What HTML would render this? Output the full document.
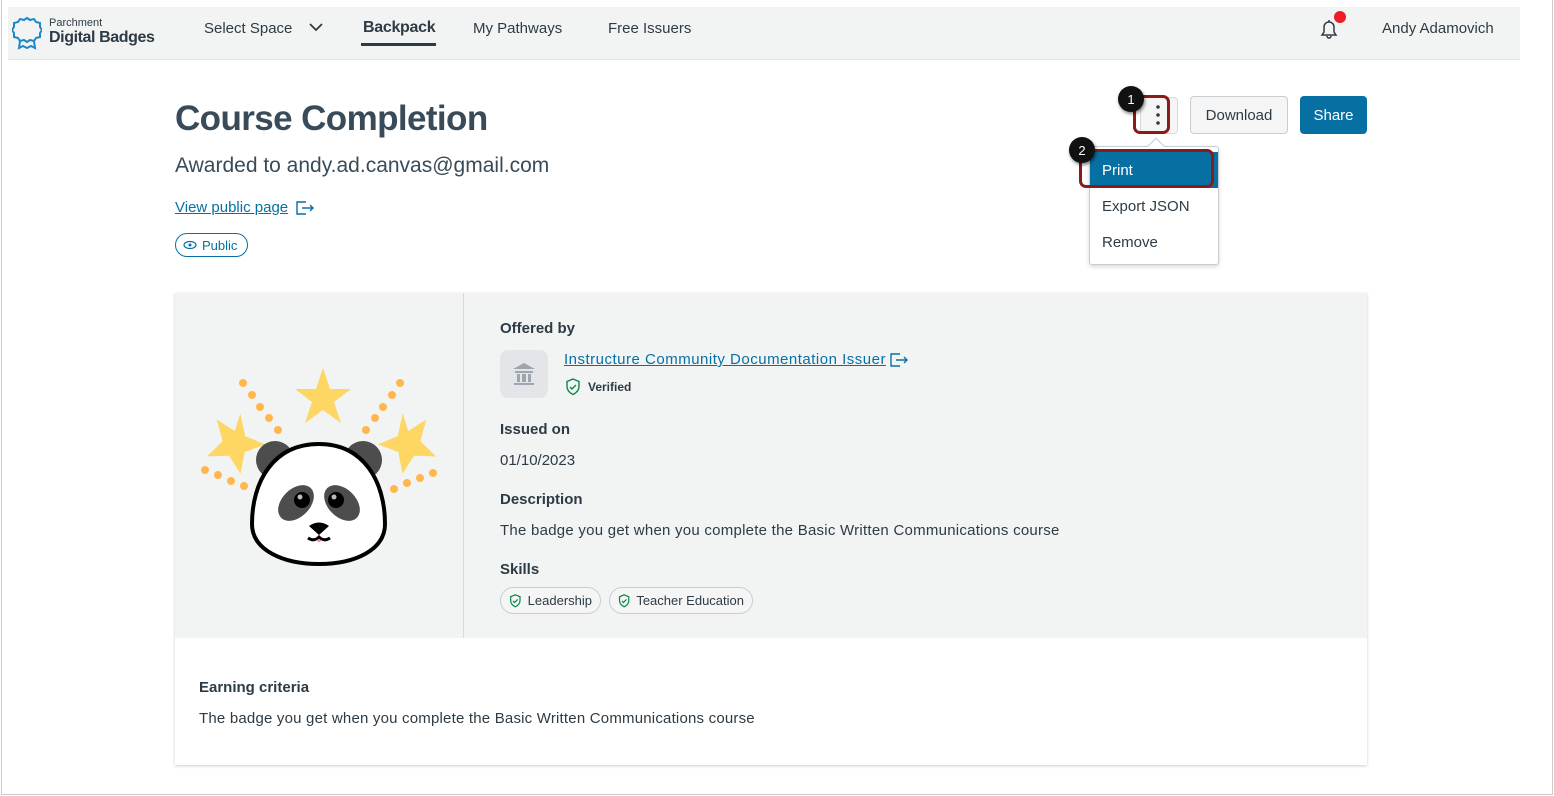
<!DOCTYPE html>
<html><head><meta charset="utf-8"><style>
*{box-sizing:border-box;margin:0;padding:0}
body{width:1554px;height:796px;background:#fff;font-family:"Liberation Sans",sans-serif;color:#2d3b45;position:relative;overflow:hidden}
.frame{position:absolute;left:1px;top:0;width:1552px;height:795px;border-left:1px solid #ccc;border-right:1px solid #ccc;border-bottom:1px solid #ccc}
.hdr{position:absolute;left:8px;top:7px;width:1512px;height:53px;background:#f2f4f4;border-bottom:1px solid #e3e6e8}
.abs{position:absolute;white-space:nowrap}
.nav{font-size:15px;color:#2d3b45}
.a{color:#0770a3;text-decoration:underline}
.btn{position:absolute;border-radius:4px;font-size:15px;display:flex;align-items:center;justify-content:center}
.h{font-size:15px;font-weight:bold;color:#2d3b45}
.t{font-size:15px;color:#2d3b45}
.chip{position:absolute;height:27px;border:1px solid #c7cdd1;border-radius:14px;background:#f5f5f5;font-size:13px;display:flex;align-items:center;padding:0 8px;gap:6px;white-space:nowrap}
.badge{position:absolute;width:26px;height:26px;border-radius:50%;background:#111;color:#fff;font-size:13px;display:flex;align-items:center;justify-content:center;box-shadow:1px 2px 3px rgba(0,0,0,.5)}
</style></head><body>
<div class="frame"></div>
<div class="hdr"></div>
<svg class="abs" style="left:12px;top:16px" width="30" height="34" viewBox="0 0 30 34"><path d="M15 2l3 2 4-1 2 3 4 1v4l2 3-2 3v4l-4 1-2 3-4-1-3 2-3-2-4 1-2-3-4-1v-4l-2-3 2-3V7l4-1 2-3 4 1z" fill="none" stroke="#1e88c7" stroke-width="2"/><path d="M8 25l-1 7 4-2 4 2 4-2 4 2-1-7" fill="none" stroke="#1e88c7" stroke-width="2"/></svg>
<div class="abs" style="left:49px;top:17px;font-size:11px">Parchment</div>
<div class="abs" style="left:49px;top:29px;font-size:16px;font-weight:bold;color:#2d3b45;letter-spacing:-.4px">Digital Badges</div>
<div class="abs nav" style="left:204px;top:20px">Select Space</div>
<svg class="abs" style="left:309px;top:22px" width="14" height="10"><path d="M1 2l6 6 6-6" fill="none" stroke="#2d3b45" stroke-width="1.8"/></svg>
<div class="abs nav" style="left:363px;top:19px;font-weight:bold;font-size:16px;letter-spacing:-.3px">Backpack</div>
<div class="abs" style="left:361px;top:43px;width:75px;height:3px;background:#2d3b45"></div>
<div class="abs nav" style="left:473px;top:20px">My Pathways</div>
<div class="abs nav" style="left:608px;top:20px">Free Issuers</div>
<svg class="abs" style="left:1317px;top:17px" width="24" height="24" viewBox="0 0 24 24"><path d="M5 18h14l-2-3v-5a5 5 0 0 0-10 0v5zM10 19a2 2 0 0 0 4 0M12 3v2" fill="none" stroke="#2d3b45" stroke-width="1.5"/></svg>
<div class="abs" style="left:1334px;top:11px;width:12px;height:12px;border-radius:50%;background:#ee1c25"></div>
<div class="abs nav" style="left:1382px;top:20px">Andy Adamovich</div>

<div class="abs" style="left:175px;top:99px;font-size:35px;font-weight:bold;color:#394b58;letter-spacing:-.6px">Course Completion</div>
<div class="abs" style="left:175px;top:154px;font-size:21px;color:#394b58">Awarded to andy.ad.canvas@gmail.com</div>
<div class="abs a" style="left:175px;top:199px;font-size:15px">View public page</div>
<svg class="abs" style="left:296px;top:201px" width="18" height="14"><path d="M10 1H1v12h9M6 7h11M14 4l3 3-3 3" fill="none" stroke="#0770a3" stroke-width="1.4"/></svg>
<div class="abs" style="left:175px;top:233px;width:73px;height:24px;border:1.5px solid #0770a3;border-radius:12px;color:#0770a3;font-size:13px;display:flex;align-items:center;padding-left:26px">Public</div>
<svg class="abs" style="left:183px;top:240px" width="14" height="10"><ellipse cx="7" cy="5" rx="6" ry="3.5" fill="none" stroke="#0770a3" stroke-width="1.2"/><circle cx="7" cy="5" r="1.5" fill="#0770a3"/></svg>

<div class="btn" style="left:1140px;top:97px;width:38px;height:37px;background:#f5f5f5;border:1px solid #d7dadd"></div>
<div class="abs" style="left:1133px;top:95px;width:37px;height:39px;border:3px solid #8b1a1a;border-radius:7px"></div>
<svg class="abs" style="left:1155px;top:103px" width="6" height="24"><circle cx="3" cy="4" r="1.8" fill="#2d3b45"/><circle cx="3" cy="12" r="1.8" fill="#2d3b45"/><circle cx="3" cy="20" r="1.8" fill="#2d3b45"/></svg>
<div class="btn" style="left:1190px;top:96px;width:98px;height:38px;background:#f5f5f5;border:1px solid #c7cdd1;color:#2d3b45">Download</div>
<div class="btn" style="left:1300px;top:96px;width:67px;height:38px;background:#0770a3;color:#fff">Share</div>
<div class="abs" style="left:1089px;top:146px;width:130px;height:119px;background:#fff;border:1px solid #c7cdd1;border-radius:3px;box-shadow:0 2px 4px rgba(0,0,0,.15)"></div>
<div class="abs" style="left:1150px;top:140px;width:12px;height:12px;background:#fff;border-left:1px solid #c7cdd1;border-top:1px solid #c7cdd1;transform:rotate(45deg)"></div>
<div class="abs" style="left:1090px;top:152px;width:128px;height:36px;background:#0770a3"></div>
<div class="abs" style="left:1102px;top:162px;color:#fff;font-size:15px">Print</div>
<div class="abs" style="left:1079px;top:149px;width:135px;height:39px;border:3px solid #8b1a1a;border-radius:7px"></div>
<div class="abs t" style="left:1102px;top:198px">Export JSON</div>
<div class="abs t" style="left:1102px;top:234px">Remove</div>
<div class="badge" style="left:1118px;top:86px">1</div>
<div class="badge" style="left:1069px;top:137px">2</div>

<div class="abs" style="left:175px;top:293px;width:1192px;height:472px;background:#fff;box-shadow:0 1px 3px rgba(0,0,0,.2)"></div>
<div class="abs" style="left:175px;top:293px;width:1192px;height:345px;background:#f2f4f4"></div>
<div class="abs" style="left:463px;top:293px;width:1px;height:345px;background:#d7dadd"></div>
<svg class="abs" style="left:195px;top:360px" width="250" height="210" viewBox="0 0 250 210">
<g fill="#ffb74d"><circle cx="48" cy="23" r="4"/><circle cx="57" cy="35" r="4"/><circle cx="65" cy="47" r="4"/><circle cx="74" cy="58" r="4"/><circle cx="83" cy="70" r="4"/><circle cx="205" cy="23" r="4"/><circle cx="197" cy="35" r="4"/><circle cx="188" cy="47" r="4"/><circle cx="180" cy="58" r="4"/><circle cx="171" cy="70" r="4"/><circle cx="10" cy="110" r="4"/><circle cx="23" cy="115" r="4"/><circle cx="36" cy="121" r="4"/><circle cx="49" cy="126" r="4"/><circle cx="238" cy="113" r="4"/><circle cx="225" cy="118" r="4"/><circle cx="212" cy="123" r="4"/><circle cx="199" cy="129" r="4"/></g>
<g fill="#fdd663"><path d="M128 8l7 21 21 0-17 13 7 21-18-13-18 13 7-21-17-13 21 0z"/><path d="M48 54l3 23 19 10-21 6-6 21-10-19-22-1 17-14-4-22 17 13z" transform="rotate(-5 40 85)"/><path d="M205 54l-3 23-19 10 21 6 6 21 10-19 22-1-17-14 4-22-17 13z" transform="rotate(5 213 85)"/></g>
<g fill="#4d4d4d"><circle cx="80" cy="100" r="19"/><circle cx="168" cy="100" r="19"/></g>
<path d="M124 84c45 0 66 38 66 80 0 26-30 40-66 40s-67-14-67-40c0-42 21-80 67-80z" fill="#fff" stroke="#000" stroke-width="4"/>
<g fill="#4d4d4d"><ellipse cx="101" cy="143" rx="14" ry="21" transform="rotate(45 101 143)"/><ellipse cx="147" cy="143" rx="14" ry="21" transform="rotate(-45 147 143)"/></g>
<circle cx="107" cy="140" r="8" fill="#000"/><circle cx="141" cy="140" r="8" fill="#000"/>
<circle cx="105" cy="137" r="2.5" fill="#bbb"/><circle cx="139" cy="137" r="2.5" fill="#bbb"/>
<path d="M114 166q10-7 20 0l-10 9z" fill="#000"/>
<path d="M113 178q6 4 11-1q5 5 11 1" fill="none" stroke="#000" stroke-width="3"/>
<path d="M121 180q3 4 6 0z" fill="#f48fb1"/>
</svg>

<div class="abs h" style="left:500px;top:320px">Offered by</div>
<div class="abs" style="left:500px;top:350px;width:48px;height:48px;border-radius:8px;background:#e3e5e8"></div>
<svg class="abs" style="left:511px;top:361px" width="26" height="26" viewBox="0 0 26 26"><path d="M13 2L2 8h22zM4 10h18v2H4zM6 13h3v8H6zM11 13h4v8h-4zM17 13h3v8h-3zM3 22h20v2H3z" fill="#9ea6ad"/></svg>
<div class="abs a" style="left:564px;top:351px;font-size:15px;letter-spacing:.5px">Instructure Community Documentation Issuer</div>
<svg class="abs" style="left:890px;top:353px" width="18" height="14"><path d="M10 1H1v12h9M6 7h11M14 4l3 3-3 3" fill="none" stroke="#0770a3" stroke-width="1.4"/></svg>
<svg class="abs" style="left:565px;top:378px" width="16" height="18" viewBox="0 0 16 18"><path d="M8 1l6 2.5v5c0 4-3 6.5-6 8-3-1.5-6-4-6-8v-5z" fill="none" stroke="#0b874b" stroke-width="1.4"/><path d="M5 9l2 2 4-4" fill="none" stroke="#0b874b" stroke-width="1.4"/></svg>
<div class="abs" style="left:588px;top:380px;font-size:12px;font-weight:bold">Verified</div>
<div class="abs h" style="left:500px;top:421px">Issued on</div>
<div class="abs t" style="left:500px;top:452px">01/10/2023</div>
<div class="abs h" style="left:500px;top:491px">Description</div>
<div class="abs t" style="left:500px;top:522px;letter-spacing:.25px">The badge you get when you complete the Basic Written Communications course</div>
<div class="abs h" style="left:500px;top:561px">Skills</div>
<div class="chip" style="left:500px;top:587px;width:101px"><svg width="13" height="14" viewBox="0 0 16 18"><path d="M8 1l6 2.5v5c0 4-3 6.5-6 8-3-1.5-6-4-6-8v-5z" fill="none" stroke="#0b874b" stroke-width="1.6"/><path d="M5 9l2 2 4-4" fill="none" stroke="#0b874b" stroke-width="1.6"/></svg>Leadership</div>
<div class="chip" style="left:609px;top:587px;width:144px"><svg width="13" height="14" viewBox="0 0 16 18"><path d="M8 1l6 2.5v5c0 4-3 6.5-6 8-3-1.5-6-4-6-8v-5z" fill="none" stroke="#0b874b" stroke-width="1.6"/><path d="M5 9l2 2 4-4" fill="none" stroke="#0b874b" stroke-width="1.6"/></svg>Teacher Education</div>
<div class="abs h" style="left:199px;top:679px">Earning criteria</div>
<div class="abs t" style="left:199px;top:710px;letter-spacing:.2px">The badge you get when you complete the Basic Written Communications course</div>
</body></html>
